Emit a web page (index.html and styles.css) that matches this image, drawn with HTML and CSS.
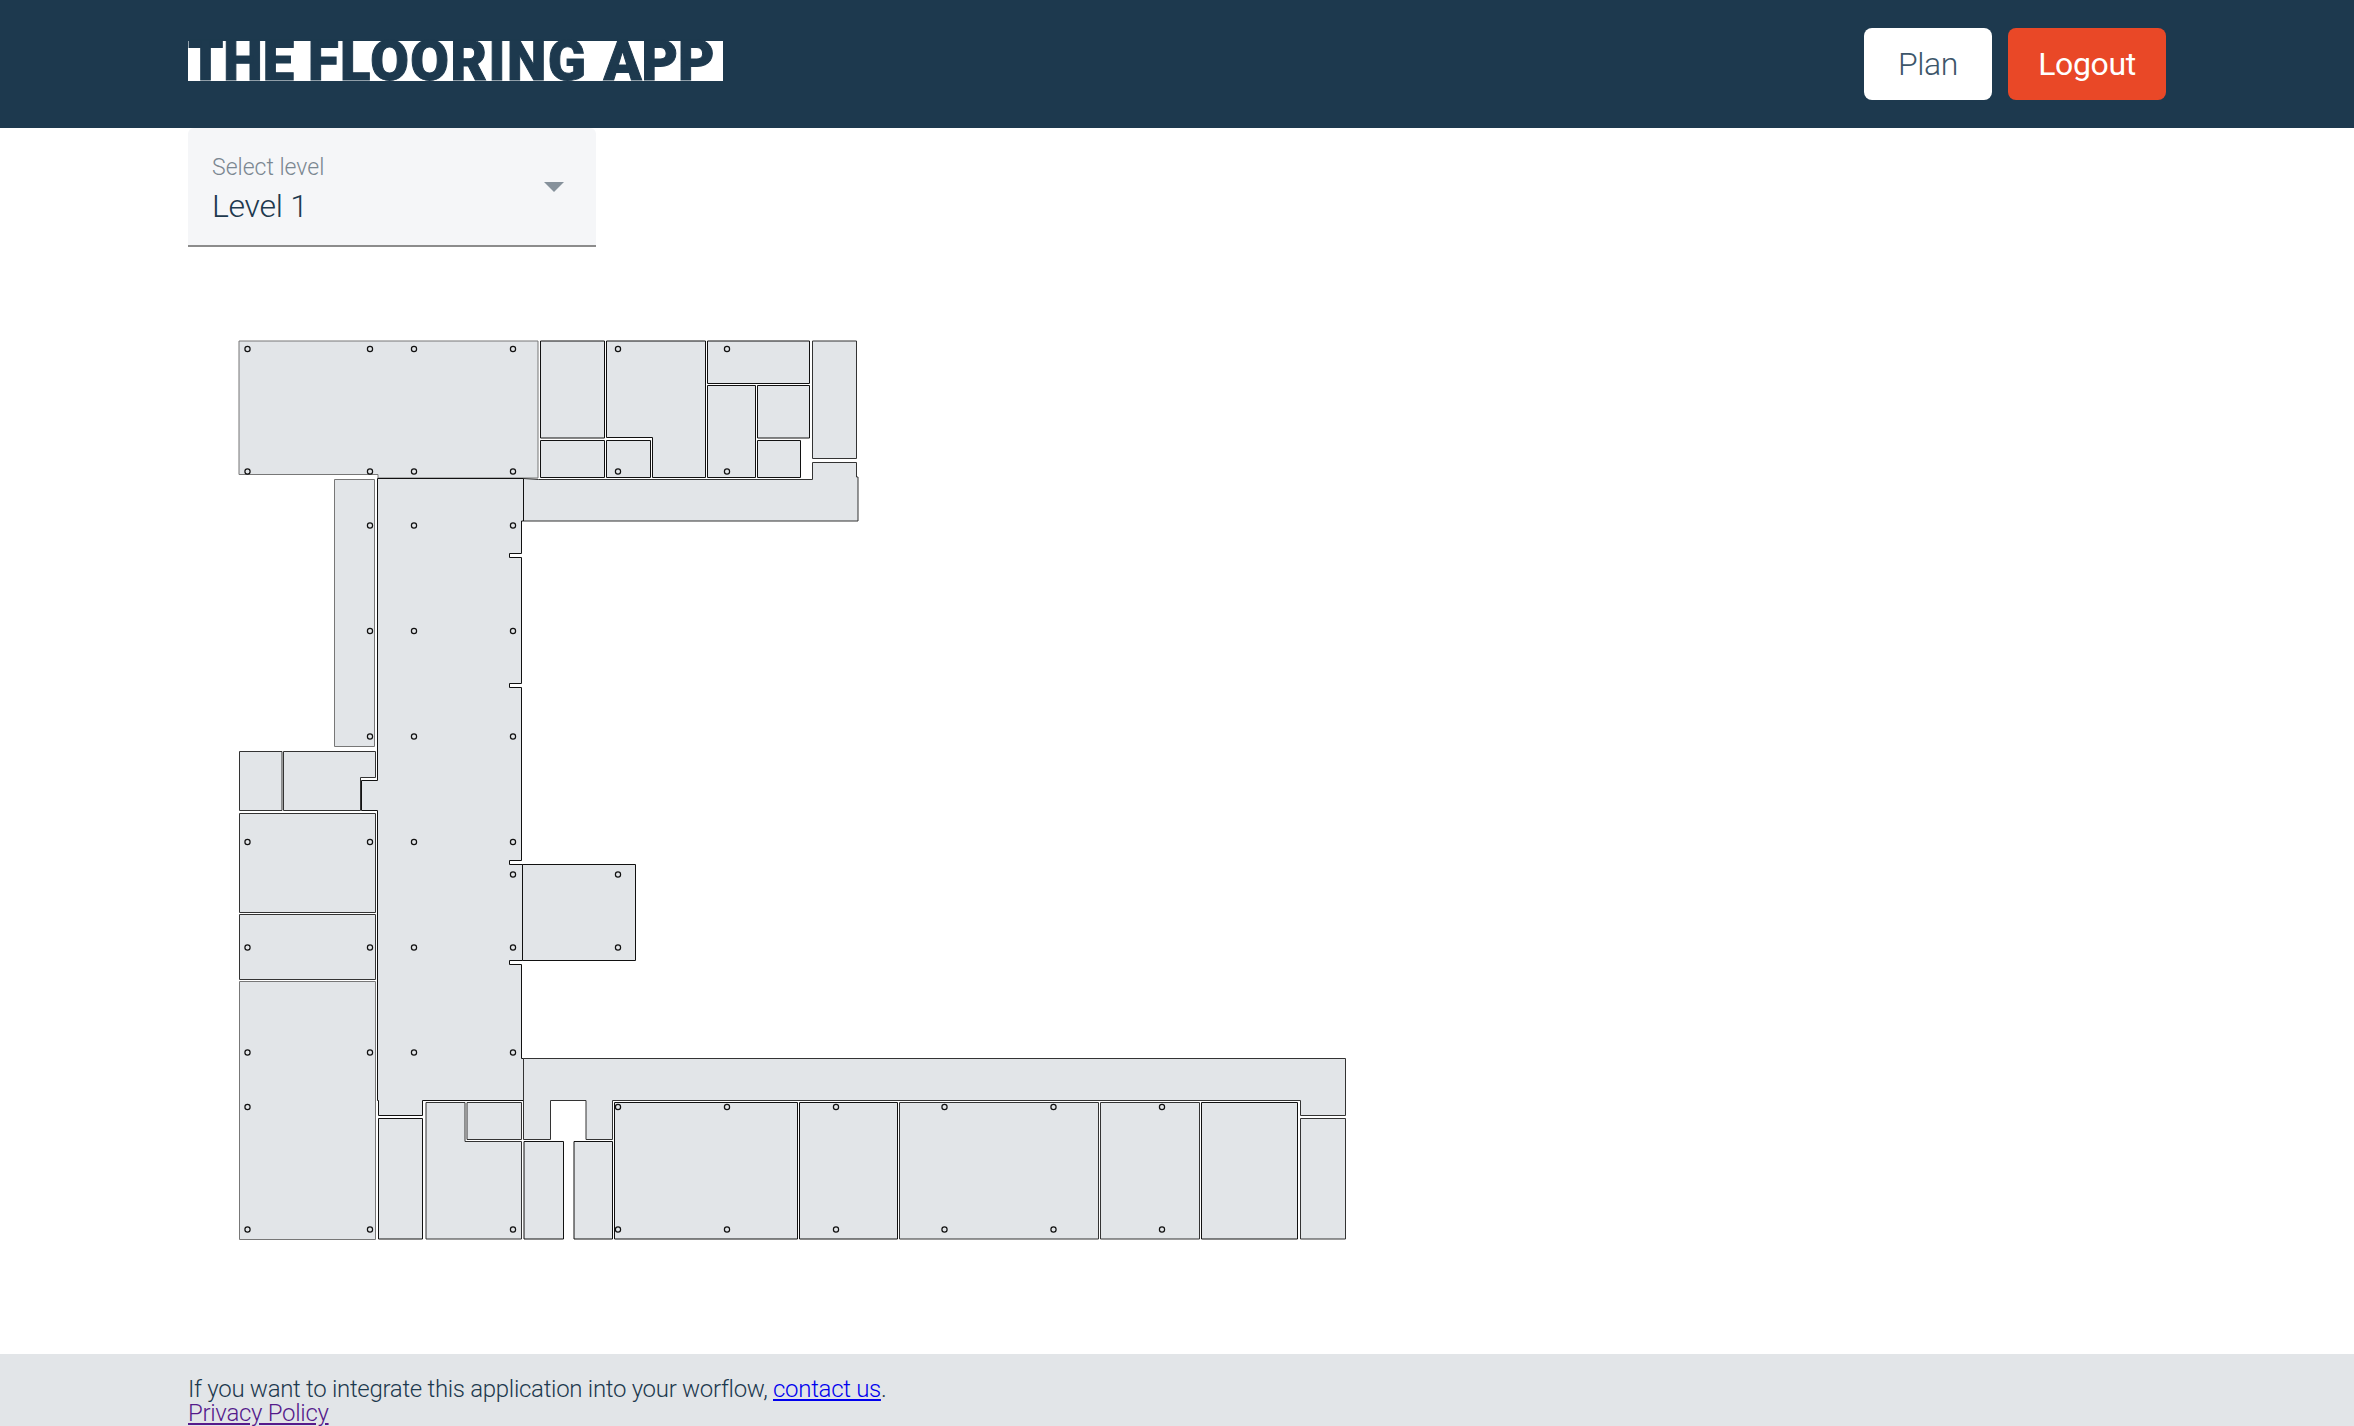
FILE: index.html
```html
<!DOCTYPE html>
<html lang="en">
<head>
<meta charset="utf-8">
<title>The Flooring App</title>
<link rel="stylesheet" href="styles.css">
</head>
<body>
<header class="topbar">
  <div class="logo">THE <span class="logo-mid">FLOORING</span> APP</div>
  <nav class="actions">
    <a class="btn btn-plan">Plan</a>
    <a class="btn btn-logout">Logout</a>
  </nav>
</header>
<main class="content">
  <div class="select">
    <div class="select-text">
      <div class="select-label">Select level</div>
      <div class="select-value">Level 1</div>
    </div>
    <span class="select-arrow"></span>
  </div>
  <svg class="plan" width="1200" height="1000" viewBox="188 300 1200 1000" xmlns="http://www.w3.org/2000/svg">
    <g class="rooms">
      <polygon class="soft" points="239,341 538,341 538,478 378,478 378,474.5 239,474.5"/>
      <polygon class="hard" points="540.5,341 604.5,341 604.5,438 540.5,438"/>
      <polygon class="hard" points="540.5,440.5 604.5,440.5 604.5,477.5 540.5,477.5"/>
      <polygon class="hard" points="606.5,341 705.5,341 705.5,477.5 652.5,477.5 652.5,437.5 606.5,437.5"/>
      <polygon class="hard" points="606.5,440.5 650.5,440.5 650.5,477.5 606.5,477.5"/>
      <polygon class="hard" points="707.5,341 809.5,341 809.5,383.5 707.5,383.5"/>
      <polygon class="hard" points="707.5,385.5 755.5,385.5 755.5,477.5 707.5,477.5"/>
      <polygon class="hard" points="757.5,385.5 809.5,385.5 809.5,438 757.5,438"/>
      <polygon class="hard" points="757.5,440.5 800.5,440.5 800.5,477.5 757.5,477.5"/>
      <polygon class="mid" points="812.5,341 856.5,341 856.5,458.5 812.5,458.5"/>
      <polygon class="mid" points="523.5,478.5 538.5,479.5 812.5,479.5 812.5,462.5 856.5,462.5 856.5,477 858,477 858,521 523.5,521"/>
      <polygon class="soft" points="334.5,479.5 374.5,479.5 374.5,746.5 334.5,746.5"/>
      <polygon class="hard" points="377.5,478.5 523.5,478.5 523.5,521 521.5,521 521.5,553.5 509.5,553.5 509.5,557.5 521.5,557.5 521.5,683.5 509.5,683.5 509.5,687.5 521.5,687.5 521.5,860.5 509.5,860.5 509.5,864.5 522.5,864.5 522.5,960.5 509.5,960.5 509.5,964.5 521.5,964.5 521.5,1058.5 523.5,1058.5 523.5,1100.5 422.5,1100.5 422.5,1115.5 378.5,1115.5 378.5,1100.5 377.5,1100.5 377.5,810.5 361.5,810.5 361.5,780.5 377.5,780.5"/>
      <polygon class="mid" points="239.5,751.5 282,751.5 282,810.5 239.5,810.5"/>
      <polygon class="mid" points="283.5,751.5 375.5,751.5 375.5,777.5 360.5,777.5 360.5,810.5 283.5,810.5"/>
      <polygon class="mid" points="239.5,813.5 375.5,813.5 375.5,912.5 239.5,912.5"/>
      <polygon class="mid" points="239.5,914.5 375.5,914.5 375.5,979.5 239.5,979.5"/>
      <polygon class="soft" points="239.5,981.5 375.5,981.5 375.5,1239.5 239.5,1239.5"/>
      <polygon class="hard" points="522.5,864.5 635.5,864.5 635.5,960.5 522.5,960.5"/>
      <polygon class="hard" points="378.5,1118.5 422.5,1118.5 422.5,1239 378.5,1239"/>
      <polygon class="mid" points="426,1102.5 465,1102.5 465,1141.5 521.5,1141.5 521.5,1239 426,1239"/>
      <polygon class="mid" points="467,1102.5 521.5,1102.5 521.5,1139.5 467,1139.5"/>
      <polygon class="hard" points="524,1141.5 563.5,1141.5 563.5,1239 524,1239"/>
      <polygon class="hard" points="574,1141.5 612.5,1141.5 612.5,1239 574,1239"/>
      <polygon class="mid" points="523.5,1058.5 1345.5,1058.5 1345.5,1115.5 1300.5,1115.5 1300.5,1100.5 612.5,1100.5 612.5,1139.5 586,1139.5 586,1100.5 550.5,1100.5 550.5,1139.5 523.5,1139.5"/>
      <polygon class="hard" points="614.5,1102.5 797.5,1102.5 797.5,1239 614.5,1239"/>
      <polygon class="hard" points="799.5,1102.5 897.5,1102.5 897.5,1239 799.5,1239"/>
      <polygon class="mid" points="899.5,1102.5 1098.5,1102.5 1098.5,1239 899.5,1239"/>
      <polygon class="mid" points="1100.5,1102.5 1199.5,1102.5 1199.5,1239 1100.5,1239"/>
      <polygon class="hard" points="1201.5,1102.5 1297.5,1102.5 1297.5,1239 1201.5,1239"/>
      <polygon class="mid" points="1300.5,1118.5 1345.5,1118.5 1345.5,1239 1300.5,1239"/>
    </g>
    <g class="pins">
      <circle cx="247.5" cy="349" r="2.6"/><circle cx="370" cy="349" r="2.6"/><circle cx="414" cy="349" r="2.6"/><circle cx="513" cy="349" r="2.6"/><circle cx="618" cy="349" r="2.6"/><circle cx="727" cy="349" r="2.6"/>
      <circle cx="247.5" cy="471.5" r="2.6"/><circle cx="370" cy="471.5" r="2.6"/><circle cx="414" cy="471.5" r="2.6"/><circle cx="513" cy="471.5" r="2.6"/><circle cx="618" cy="471.5" r="2.6"/><circle cx="727" cy="471.5" r="2.6"/>
      <circle cx="370" cy="525.5" r="2.6"/><circle cx="414" cy="525.5" r="2.6"/><circle cx="513" cy="525.5" r="2.6"/>
      <circle cx="370" cy="631" r="2.6"/><circle cx="414" cy="631" r="2.6"/><circle cx="513" cy="631" r="2.6"/>
      <circle cx="370" cy="736.5" r="2.6"/><circle cx="414" cy="736.5" r="2.6"/><circle cx="513" cy="736.5" r="2.6"/>
      <circle cx="247.5" cy="842" r="2.6"/><circle cx="370" cy="842" r="2.6"/><circle cx="414" cy="842" r="2.6"/><circle cx="513" cy="842" r="2.6"/>
      <circle cx="513" cy="874.5" r="2.6"/><circle cx="618" cy="874.5" r="2.6"/>
      <circle cx="247.5" cy="947.5" r="2.6"/><circle cx="370" cy="947.5" r="2.6"/><circle cx="414" cy="947.5" r="2.6"/><circle cx="513" cy="947.5" r="2.6"/><circle cx="618" cy="947.5" r="2.6"/>
      <circle cx="247.5" cy="1052.5" r="2.6"/><circle cx="370" cy="1052.5" r="2.6"/><circle cx="414" cy="1052.5" r="2.6"/><circle cx="513" cy="1052.5" r="2.6"/>
      <circle cx="247.5" cy="1107" r="2.6"/><circle cx="618" cy="1107" r="2.6"/><circle cx="727" cy="1107" r="2.6"/><circle cx="836" cy="1107" r="2.6"/><circle cx="944.5" cy="1107" r="2.6"/><circle cx="1053.5" cy="1107" r="2.6"/><circle cx="1162" cy="1107" r="2.6"/>
      <circle cx="247.5" cy="1229.5" r="2.6"/><circle cx="370" cy="1229.5" r="2.6"/><circle cx="513" cy="1229.5" r="2.6"/><circle cx="618" cy="1229.5" r="2.6"/><circle cx="727" cy="1229.5" r="2.6"/><circle cx="836" cy="1229.5" r="2.6"/><circle cx="944.5" cy="1229.5" r="2.6"/><circle cx="1053.5" cy="1229.5" r="2.6"/><circle cx="1162" cy="1229.5" r="2.6"/>
    </g>
  </svg>
</main>
<footer class="footer">
  <div>If you want to integrate this application into your worflow, <a href="#contact" class="link-new">contact us</a>.</div>
  <div><a href="#privacy" class="link-seen">Privacy Policy</a></div>
</footer>
</body>
</html>
```

FILE: styles.css
```css
* { box-sizing: border-box; }
html, body { margin: 0; padding: 0; }
body {
  height: 100vh;
  display: flex;
  flex-direction: column;
  overflow: hidden;
  background: #fff;
  color: #1d394e;
  font-family: Roboto, "Liberation Sans", sans-serif;
  font-weight: 300;
}
.topbar {
  height: 128px;
  flex: none;
  background: #1d394e;
  padding: 0 188px;
  display: flex;
  justify-content: space-between;
}
.logo {
  width: 535px;
  height: 40px;
  margin-top: 41px;
  line-height: 40px;
  background: #fff;
  color: #1d394e;
  font-weight: 900;
  font-size: 56px;
  letter-spacing: 0;
  word-spacing: 0;
  white-space: nowrap;
  -webkit-text-stroke: 1px #1d394e;
}
.logo-mid { letter-spacing: 1.5px; margin-right: 2px; }
.actions {
  display: flex;
  gap: 16px;
  margin-top: 28px;
  height: 72px;
}
.btn {
  display: flex;
  align-items: center;
  justify-content: center;
  border-radius: 8px;
  font-size: 32px;
  font-weight: 300;
  letter-spacing: -0.4px;
}
.btn-plan { width: 128px; background: #fff; color: #3d566a; }
.btn-logout { width: 158px; background: #e94827; color: #fff; font-weight: 400; }
.content { flex: 1; padding: 0 188px; min-height: 0; }
.select {
  width: 408px;
  height: 119px;
  background: #f5f6f8;
  border-bottom: 2px solid #8c8c8c;
  border-radius: 6px 6px 0 0;
  padding: 25px 24px 0;
  display: flex;
  justify-content: space-between;
  align-items: flex-start;
}
.select-label { font-size: 23px; line-height: 30px; color: #7b8791; }
.select-value { font-size: 32px; line-height: 44px; margin-top: 1px; letter-spacing: -0.3px; color: #1d394e; }
.select-arrow {
  width: 0;
  height: 0;
  margin: 29px 8px 0 0;
  border-left: 10px solid transparent;
  border-right: 10px solid transparent;
  border-top: 10px solid #86919b;
}
.plan { display: block; margin-top: 53px; overflow: visible; }
.rooms polygon { fill: #e2e5e8; stroke-width: 1; }
.hard { stroke: #111; }
.mid { stroke: #333; }
.soft { stroke: #777; }
.pins circle { fill: none; stroke: #111; stroke-width: 1.2; }
.footer {
  height: 72px;
  flex: none;
  background: #e2e5e8;
  padding: 23px 188px 0;
  font-size: 24px;
  line-height: 24px;
  letter-spacing: -0.3px;
  overflow: hidden;
}
.link-new { color: #0000ee; }
.link-seen { color: #551a8b; }
```
